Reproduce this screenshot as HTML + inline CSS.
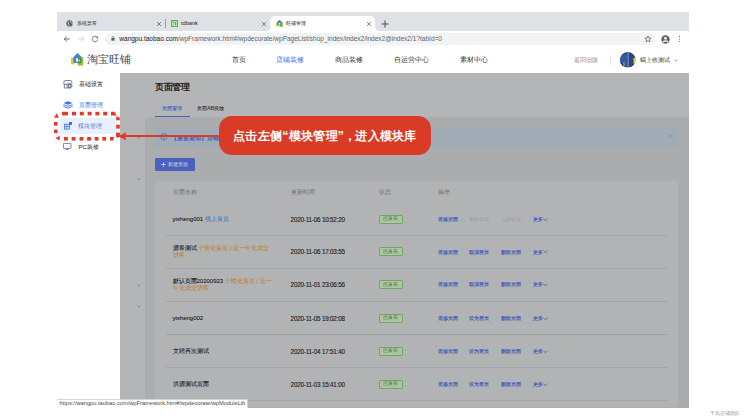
<!DOCTYPE html>
<html><head><meta charset="utf-8">
<style>
*{box-sizing:border-box;margin:0;padding:0}
html,body{width:746px;height:420px;overflow:hidden;background:#fff;font-family:"Liberation Sans",sans-serif}
.a{position:absolute;white-space:nowrap}
.t{line-height:1}
</style></head><body>
<!-- ============ BROWSER CHROME ============ -->
<div class="a" style="left:57px;top:12px;width:632px;height:19px;background:#dee1e6"></div>
<!-- tab1 -->
<svg class="a" style="left:65.9px;top:19.8px" width="7" height="7" viewBox="0 0 8 8"><circle cx="4" cy="4" r="3.6" fill="#5f6368"/><path d="M2 1.5 Q3.5 3 2.5 4.5 Q4 5 3.6 7.4 M5.2 0.8 Q4.6 2.5 6.2 3.2 Q7 3.5 7.6 3.8" stroke="#dee1e6" stroke-width="0.9" fill="none"/></svg>
<div class="a t" style="left:76.8px;top:20.6px;font-size:5.15px;color:#202124">系统异常</div>
<svg class="a" style="left:155.8px;top:20.6px" width="6" height="6" viewBox="0 0 6 6"><path d="M1 1L5 5M5 1L1 5" stroke="#45484c" stroke-width="0.65"/></svg>
<div class="a" style="left:165px;top:19px;width:1px;height:9px;background:#9aa0a6"></div>
<!-- tab2 -->
<svg class="a" style="left:170.8px;top:19.8px" width="7.2" height="7.2" viewBox="0 0 8 8"><rect width="8" height="8" fill="#4fb848"/><rect x="1.3" y="1.6" width="5.4" height="4.8" fill="#e6f4e4"/><path d="M1.9 2.2H4.2V2.9H3.4V5.8H2.7V2.9H1.9Z M4.3 2.2H5 Q6.2 2.2 6.2 4 Q6.2 5.8 5 5.8H4.3Z" fill="#4fb848"/></svg>

<div class="a t" style="left:181px;top:20.7px;font-size:5.65px;color:#202124">tdbank</div>
<svg class="a" style="left:260.5px;top:20.6px" width="6" height="6" viewBox="0 0 6 6"><path d="M1 1L5 5M5 1L1 5" stroke="#45484c" stroke-width="0.65"/></svg>
<!-- active tab -->
<div class="a" style="left:270px;top:16px;width:105px;height:15px;background:#fff;border-radius:5px 5px 0 0"></div><div class="a" style="left:266px;top:26.5px;width:4.5px;height:4.5px;background:#fff"></div><div class="a" style="left:265.5px;top:25.5px;width:5px;height:5.5px;background:#dee1e6;border-bottom-right-radius:4.5px"></div><div class="a" style="left:374.5px;top:26.5px;width:4.5px;height:4.5px;background:#fff"></div><div class="a" style="left:374.5px;top:25.5px;width:5px;height:5.5px;background:#dee1e6;border-bottom-left-radius:4.5px"></div>
<svg class="a" style="left:274.07px;top:18.07px" width="10.35" height="10.35" viewBox="0 0 18 18"><rect x="3" y="7.7" width="3.4" height="6.7" fill="#f2c230"/><rect x="9.7" y="7.1" width="5.5" height="8.4" fill="#8cc63f"/><path d="M5.2 7.6 L9.4 3 L14.3 7.4 L10.2 7.4 L10.2 13 L5.6 13 Z" fill="#3b82e8"/><ellipse cx="9.1" cy="10.1" rx="1.2" ry="2" fill="#fff"/><path d="M10 8.3 H11.8 Q13 8.3 13 9.6 V11.3 Q13 12.8 11.6 12.8 H10" stroke="#2f7a2c" stroke-width="1.1" fill="none"/></svg>
<div class="a t" style="left:286px;top:20.6px;font-size:5.25px;color:#202124">旺铺管理</div>
<svg class="a" style="left:365.9px;top:20.6px" width="6" height="6" viewBox="0 0 6 6"><path d="M1 1L5 5M5 1L1 5" stroke="#45484c" stroke-width="0.65"/></svg>
<svg class="a" style="left:380.8px;top:19.6px" width="8" height="8" viewBox="0 0 8 8"><path d="M4 0.5V7.5M0.5 4H7.5" stroke="#3c4043" stroke-width="0.9"/></svg>
<!-- toolbar -->
<div class="a" style="left:57px;top:31px;width:632px;height:16px;background:#fff"></div><div class="a" style="left:57px;top:46.5px;width:632px;height:0.8px;background:#e6e8eb"></div>
<svg class="a" style="left:63px;top:34.7px" width="8" height="8" viewBox="0 0 8 8"><path d="M6.9 4H1.3M3.9 1.4L1.3 4L3.9 6.6" stroke="#5a5e63" stroke-width="0.9" fill="none"/></svg>
<svg class="a" style="left:77px;top:34.7px" width="8" height="8" viewBox="0 0 8 8"><path d="M1.1 4H6.7M4.1 1.4L6.7 4L4.1 6.6" stroke="#c4c7ca" stroke-width="0.75" fill="none"/></svg>
<svg class="a" style="left:91px;top:34.7px" width="8" height="8" viewBox="0 0 8 8"><path d="M6.4 2.5 A2.8 2.8 0 1 0 6.8 4.6" stroke="#5a5e63" stroke-width="0.85" fill="none"/><path d="M7 1 V3.2 H4.8 Z" fill="#5f6368"/></svg>
<div class="a" style="left:104.8px;top:33.1px;width:550.4px;height:11.5px;background:#f1f3f4;border-radius:6px"></div>
<svg class="a" style="left:110.8px;top:36.3px" width="4" height="5" viewBox="0 0 4 5"><path d="M1 2.2V1.5a1 1 0 0 1 2 0v0.7" stroke="#5f6368" stroke-width="0.6" fill="none"/><rect x="0.4" y="2" width="3.2" height="2.7" fill="#5f6368"/></svg>
<div class="a t" style="left:119.3px;top:35.5px;font-size:6.52px;color:#5f6368"><span style="color:#202124">wangpu.taobao.com</span>/wpFramework.htm#/wpdecorate/wpPageList/shop_index/index2/index2@index2/1?tabId=0</div>
<svg class="a" style="left:643.6px;top:34.9px" width="8" height="8" viewBox="0 0 8 8"><polygon points="4.00,0.90 4.85,3.03 7.14,3.18 5.38,4.65 5.94,6.87 4.00,5.65 2.06,6.87 2.62,4.65 0.86,3.18 3.15,3.03" fill="none" stroke="#5f6368" stroke-width="0.75" stroke-linejoin="round"/></svg>
<svg class="a" style="left:660.5px;top:34.5px" width="9" height="9" viewBox="0 0 9 9"><circle cx="4.5" cy="4.5" r="4.2" fill="#5f6368"/><circle cx="4.5" cy="3.3" r="1.4" fill="#fff"/><path d="M1.9 7 Q4.5 4.6 7.1 7" stroke="#fff" stroke-width="1.2" fill="none"/></svg>
<svg class="a" style="left:677.8px;top:35px" width="3" height="8" viewBox="0 0 3 8"><circle cx="1.5" cy="1.4" r="0.62" fill="#5f6368"/><circle cx="1.5" cy="4" r="0.62" fill="#5f6368"/><circle cx="1.5" cy="6.5" r="0.62" fill="#5f6368"/></svg>

<!-- ============ PAGE HEADER ============ -->
<div class="a" style="left:57px;top:47.3px;width:632px;height:25.7px;background:#fff"></div>
<svg class="a" style="left:68px;top:50px" width="18" height="18" viewBox="0 0 18 18"><rect x="3" y="7.7" width="3.4" height="6.7" fill="#f2c230"/><rect x="9.7" y="7.1" width="5.5" height="8.4" fill="#8cc63f"/><path d="M5.2 7.6 L9.4 3 L14.3 7.4 L10.2 7.4 L10.2 13 L5.6 13 Z" fill="#3b82e8"/><ellipse cx="9.1" cy="10.1" rx="1.2" ry="2" fill="#fff"/><path d="M10 8.3 H11.8 Q13 8.3 13 9.6 V11.3 Q13 12.8 11.6 12.8 H10" stroke="#2f7a2c" stroke-width="1.1" fill="none"/></svg>
<div class="a t" style="left:87px;top:54.4px;font-size:10.5px;color:#404858;letter-spacing:0.1px">淘宝旺铺</div>
<div class="a t" style="left:232px;top:57px;font-size:6.8px;color:#333">首页</div>
<div class="a t" style="left:276px;top:57px;font-size:6.8px;color:#3a6ff0">店铺装修</div>
<div class="a t" style="left:335px;top:57px;font-size:6.8px;color:#333">商品装修</div>
<div class="a t" style="left:394px;top:57px;font-size:6.8px;color:#333">自运营中心</div>
<div class="a t" style="left:460px;top:57px;font-size:6.8px;color:#333">素材中心</div>
<div class="a t" style="left:574px;top:57px;font-size:6.3px;color:#7d8699">返回旧版</div>
<div class="a" style="left:609.5px;top:56px;width:0.7px;height:9px;background:#e3e5e8"></div>
<svg class="a" style="left:620.3px;top:52.3px" width="15.6" height="15.6" viewBox="0 0 16 16"><defs><clipPath id="av"><circle cx="8" cy="8" r="7.9"/></clipPath></defs><g clip-path="url(#av)"><rect width="16" height="16" fill="#2f4c8e"/><path d="M0 6 L5 2 L8 1 L8 16 L0 16Z" fill="#3556a0"/><path d="M9 1 L13 3 L16 8 L16 16 L9 16Z" fill="#2a4584"/><path d="M0 10 L3 12 L4 16 L0 16Z" fill="#1c2a4a"/><path d="M3 11 L4.5 10.5 L5 14 L3.5 14Z" fill="#a9a040"/><path d="M8.4 0 V16" stroke="#8d9bbf" stroke-width="0.9"/><path d="M13.8 6.5 L16 6 L16 12 L14 12.5Z" fill="#e0d93a"/></g></svg>
<div class="a t" style="left:639.8px;top:57px;font-size:6.2px;color:#333">蜗上收测试</div>
<svg class="a" style="left:673.5px;top:59px" width="4" height="3" viewBox="0 0 4 3"><path d="M0.4 0.6L2 2.2L3.6 0.6" stroke="#666" stroke-width="0.6" fill="none"/></svg>

<!-- ============ SIDEBAR ============ -->
<div class="a" style="left:57px;top:73px;width:63px;height:334px;background:#fff"></div>
<svg class="a" style="left:63px;top:80px" width="10" height="9" viewBox="0 0 10 9"><path d="M0.9 4.2 V2 Q0.9 0.5 2.4 0.5 H7.3 Q8.8 0.5 8.8 2 V3.4" stroke="#56627e" stroke-width="0.8" fill="none"/><path d="M0.9 4.3 H4.6 M1.3 4.3 V8 H4.6" stroke="#56627e" stroke-width="0.8" fill="none"/><circle cx="6.5" cy="5.8" r="2.6" stroke="#56627e" stroke-width="1" stroke-dasharray="1.1 0.9" fill="none"/><circle cx="6.5" cy="5.8" r="1.6" stroke="#56627e" stroke-width="1.2" fill="none"/></svg>
<div class="a t" style="left:78.5px;top:81px;font-size:6.1px;color:#1a1a1a">基础设置</div>
<svg class="a" style="left:62.5px;top:101.4px" width="10" height="7.5" viewBox="0 0 10 7.5"><path d="M5 0.2 L9.6 2 L5 3.8 L0.4 2Z" fill="#3d73eb"/><path d="M0.4 3.6 L5 5.4 L9.6 3.6" stroke="#3d73eb" stroke-width="0.9" fill="none"/><path d="M0.4 5.4 L5 7.2 L9.6 5.4" stroke="#3d73eb" stroke-width="0.9" fill="none"/></svg>
<div class="a t" style="left:78.5px;top:102px;font-size:6.1px;color:#2f66e6">页面管理</div>
<div class="a" style="left:60px;top:118px;width:56.8px;height:16.3px;background:#e9f0fd;border-radius:1.5px"></div>
<svg class="a" style="left:63.6px;top:122.3px" width="8" height="7.5" viewBox="0 0 8 7.5"><rect x="0.4" y="2.2" width="5" height="4.9" stroke="#3d73eb" stroke-width="0.8" fill="none"/><path d="M0.4 4.6 H5.4 M2.9 2.2 V7.1" stroke="#3d73eb" stroke-width="0.8"/><rect x="5" y="0" width="3" height="3" fill="#3d73eb"/></svg>
<div class="a t" style="left:78.4px;top:123px;font-size:6.1px;color:#4f76dc">模块管理</div>
<svg class="a" style="left:63.3px;top:143.3px" width="8.4" height="7.2" viewBox="0 0 8.4 7.2"><rect x="0.4" y="0.4" width="7.6" height="5" rx="0.4" stroke="#5a6a8a" stroke-width="0.8" fill="none"/><path d="M4.2 5.4V7M2.4 6.8H6" stroke="#5a6a8a" stroke-width="0.8"/></svg>
<div class="a t" style="left:78.5px;top:144px;font-size:6.1px;color:#1a1a1a">PC装修</div>

<!-- ============ MAIN (overlaid) ============ -->
<div class="a" style="left:120px;top:73px;width:569px;height:334px;background:#b4b5b7"></div>
<div class="a t" style="left:155.2px;top:83px;font-size:8.5px;letter-spacing:-0.45px;font-weight:bold;color:#1c1c1d">页面管理</div>
<div class="a t" style="left:162px;top:106px;font-size:5.35px;color:#4563cc;-webkit-text-stroke-width:0.12px">页面管理</div>
<div class="a t" style="left:197px;top:106px;font-size:5.35px;color:#2e2e30;-webkit-text-stroke-width:0.08px">页面AB投放</div>
<div class="a" style="left:155.3px;top:115.9px;width:34.7px;height:1.1px;background:#4460c0"></div>
<div class="a" style="left:144.5px;top:117px;width:544.5px;height:290.5px;background:#abacae"></div>
<!-- chevrons left strip -->
<svg class="a" style="left:136.5px;top:135.5px" width="4" height="3" viewBox="0 0 4 3"><path d="M0.4 2.4L2 0.8L3.6 2.4" stroke="#76777a" stroke-width="0.7" fill="none"/></svg>
<svg class="a" style="left:136.5px;top:178px" width="4" height="3" viewBox="0 0 4 3"><path d="M0.4 0.6L2 2.2L3.6 0.6" stroke="#76777a" stroke-width="0.7" fill="none"/></svg>
<svg class="a" style="left:136.5px;top:283.5px" width="4" height="3" viewBox="0 0 4 3"><path d="M0.4 0.6L2 2.2L3.6 0.6" stroke="#76777a" stroke-width="0.7" fill="none"/></svg>
<svg class="a" style="left:136.5px;top:304.5px" width="4" height="3" viewBox="0 0 4 3"><path d="M0.4 0.6L2 2.2L3.6 0.6" stroke="#76777a" stroke-width="0.7" fill="none"/></svg>
<!-- alert -->
<div class="a" style="left:155px;top:127.5px;width:523.5px;height:20.5px;background:#a1acb6"></div>
<svg class="a" style="left:159.8px;top:133.3px" width="7.5" height="7.5" viewBox="0 0 8 8"><circle cx="4" cy="4" r="3.4" stroke="#3d5bb8" stroke-width="0.7" fill="none"/><path d="M4 3.4V6" stroke="#3d5bb8" stroke-width="0.8"/><circle cx="4" cy="2.3" r="0.45" fill="#3d5bb8"/></svg>
<div class="a t" style="left:171.4px;top:135.6px;font-size:5.8px;font-weight:bold;color:#4460c0">【重要通知】店铺装修升级</div>
<svg class="a" style="left:667.5px;top:133.5px" width="5" height="5" viewBox="0 0 5 5"><path d="M0.5 0.5L4.5 4.5M4.5 0.5L0.5 4.5" stroke="#7d8088" stroke-width="0.6"/></svg>
<!-- button -->
<div class="a" style="left:155px;top:158.3px;width:39.6px;height:12.3px;background:#4a62bd;border-radius:1.5px"></div>
<svg class="a" style="left:161px;top:162px" width="5" height="5" viewBox="0 0 5 5"><path d="M2.5 0.2V4.8M0.2 2.5H4.8" stroke="#d0d6ec" stroke-width="0.8"/></svg><div class="a t" style="left:167.5px;top:161.6px;font-size:5.3px;color:#d0d6ec">新建页面</div>
<!-- card -->
<div class="a" style="left:155px;top:181.2px;width:523px;height:226px;background:#b2b3b5"></div>
<div class="a t" style="left:172.9px;top:190.2px;font-size:5.8px;color:#6e6f71">页面名称</div>
<div class="a t" style="left:290.8px;top:190.2px;font-size:5.8px;color:#6e6f71">更新时间</div>
<div class="a t" style="left:379.2px;top:190.2px;font-size:5.8px;color:#6e6f71">状态</div>
<div class="a t" style="left:437.5px;top:190.2px;font-size:5.8px;color:#6e6f71">操作</div>

<div id="rows">
<div class="a t" style="left:172.5px;top:216.0px;font-size:6.0px;color:#1e1e1f;-webkit-text-stroke-width:0.1px">yisheng001 <span style="color:#4a7dc0">线上首页</span></div>
<div class="a t" style="left:290.6px;top:216.8px;font-size:6.3px;letter-spacing:-0.2px;color:#1e1e1f;-webkit-text-stroke-width:0.12px">2020-11-06 10:52:20</div>
<div class="a" style="left:379px;top:214.6px;width:24px;height:9.1px;background:#adc3a4;border:0.9px solid #6fa860;border-radius:1.2px"></div>
<div class="a t" style="left:382.8px;top:216.3px;font-size:5.4px;color:#3a7a30">已发布</div>
<div class="a t" style="left:438.2px;top:216.8px;font-size:5.3px;color:#3d5bb8;-webkit-text-stroke-width:0.15px">装修页面</div>
<div class="a t" style="left:469.4px;top:216.8px;font-size:5.3px;color:#9a9b9d;-webkit-text-stroke-width:0">删除页面</div>
<div class="a t" style="left:501.0px;top:216.8px;font-size:5.3px;color:#9a9b9d;-webkit-text-stroke-width:0">人群投放</div>
<div class="a t" style="left:532.8px;top:216.8px;font-size:5.3px;color:#3d5bb8;-webkit-text-stroke-width:0.15px">更多</div>
<svg class="a" style="left:542.6px;top:217.7px" width="5" height="3.4" viewBox="0 0 5 3.4"><path d="M0.4 0.5L2.5 2.8L4.6 0.5" stroke="#3d5bb8" stroke-width="0.75" fill="none"/></svg>
<div class="a t" style="left:172.5px;top:244.9px;font-size:6.0px;color:#1e1e1f;-webkit-text-stroke-width:0.1px">源希测试 <span style="color:#bd8840">个性化首页 | 近一年无成交</span></div>
<div class="a t" style="left:172.5px;top:252.3px;font-size:6.0px;color:#1e1e1f;-webkit-text-stroke-width:0.1px"><span style="color:#bd8840">访客</span></div>
<div class="a t" style="left:290.6px;top:249.4px;font-size:6.3px;letter-spacing:-0.2px;color:#1e1e1f;-webkit-text-stroke-width:0.12px">2020-11-06 17:03:55</div>
<div class="a" style="left:379px;top:247.3px;width:24px;height:9.1px;background:#adc3a4;border:0.9px solid #6fa860;border-radius:1.2px"></div>
<div class="a t" style="left:382.8px;top:249.0px;font-size:5.4px;color:#3a7a30">已发布</div>
<div class="a t" style="left:438.2px;top:249.5px;font-size:5.3px;color:#3d5bb8;-webkit-text-stroke-width:0.15px">装修页面</div>
<div class="a t" style="left:469.4px;top:249.5px;font-size:5.3px;color:#3d5bb8;-webkit-text-stroke-width:0.15px">取消首页</div>
<div class="a t" style="left:501.0px;top:249.5px;font-size:5.3px;color:#3d5bb8;-webkit-text-stroke-width:0.15px">删除页面</div>
<div class="a t" style="left:532.8px;top:249.5px;font-size:5.3px;color:#3d5bb8;-webkit-text-stroke-width:0.15px">更多</div>
<svg class="a" style="left:542.6px;top:250.4px" width="5" height="3.4" viewBox="0 0 5 3.4"><path d="M0.4 0.5L2.5 2.8L4.6 0.5" stroke="#3d5bb8" stroke-width="0.75" fill="none"/></svg>
<div class="a t" style="left:172.5px;top:277.8px;font-size:6.0px;color:#1e1e1f;-webkit-text-stroke-width:0.1px">默认页面20200923 <span style="color:#bd8840">个性化首页 | 近一</span></div>
<div class="a t" style="left:172.5px;top:285.2px;font-size:6.0px;color:#1e1e1f;-webkit-text-stroke-width:0.1px"><span style="color:#bd8840">年无成交访客</span></div>
<div class="a t" style="left:290.6px;top:282.4px;font-size:6.3px;letter-spacing:-0.2px;color:#1e1e1f;-webkit-text-stroke-width:0.12px">2020-11-01 23:06:56</div>
<div class="a" style="left:379px;top:280.2px;width:24px;height:9.1px;background:#adc3a4;border:0.9px solid #6fa860;border-radius:1.2px"></div>
<div class="a t" style="left:382.8px;top:281.9px;font-size:5.4px;color:#3a7a30">已发布</div>
<div class="a t" style="left:438.2px;top:282.4px;font-size:5.3px;color:#3d5bb8;-webkit-text-stroke-width:0.15px">装修页面</div>
<div class="a t" style="left:469.4px;top:282.4px;font-size:5.3px;color:#3d5bb8;-webkit-text-stroke-width:0.15px">取消首页</div>
<div class="a t" style="left:501.0px;top:282.4px;font-size:5.3px;color:#3d5bb8;-webkit-text-stroke-width:0.15px">删除页面</div>
<div class="a t" style="left:532.8px;top:282.4px;font-size:5.3px;color:#3d5bb8;-webkit-text-stroke-width:0.15px">更多</div>
<svg class="a" style="left:542.6px;top:283.3px" width="5" height="3.4" viewBox="0 0 5 3.4"><path d="M0.4 0.5L2.5 2.8L4.6 0.5" stroke="#3d5bb8" stroke-width="0.75" fill="none"/></svg>
<div class="a t" style="left:172.5px;top:315.0px;font-size:6.0px;color:#1e1e1f;-webkit-text-stroke-width:0.1px">yisheng002</div>
<div class="a t" style="left:290.6px;top:315.8px;font-size:6.3px;letter-spacing:-0.2px;color:#1e1e1f;-webkit-text-stroke-width:0.12px">2020-11-05 19:02:08</div>
<div class="a" style="left:379px;top:313.6px;width:24px;height:9.1px;background:#adc3a4;border:0.9px solid #6fa860;border-radius:1.2px"></div>
<div class="a t" style="left:382.8px;top:315.3px;font-size:5.4px;color:#3a7a30">已发布</div>
<div class="a t" style="left:438.2px;top:315.8px;font-size:5.3px;color:#3d5bb8;-webkit-text-stroke-width:0.15px">装修页面</div>
<div class="a t" style="left:469.4px;top:315.8px;font-size:5.3px;color:#3d5bb8;-webkit-text-stroke-width:0.15px">设为首页</div>
<div class="a t" style="left:501.0px;top:315.8px;font-size:5.3px;color:#3d5bb8;-webkit-text-stroke-width:0.15px">删除页面</div>
<div class="a t" style="left:532.8px;top:315.8px;font-size:5.3px;color:#3d5bb8;-webkit-text-stroke-width:0.15px">更多</div>
<svg class="a" style="left:542.6px;top:316.7px" width="5" height="3.4" viewBox="0 0 5 3.4"><path d="M0.4 0.5L2.5 2.8L4.6 0.5" stroke="#3d5bb8" stroke-width="0.75" fill="none"/></svg>
<div class="a t" style="left:172.5px;top:348.0px;font-size:6.0px;color:#1e1e1f;-webkit-text-stroke-width:0.1px">文聘再次测试</div>
<div class="a t" style="left:290.6px;top:348.8px;font-size:6.3px;letter-spacing:-0.2px;color:#1e1e1f;-webkit-text-stroke-width:0.12px">2020-11-04 17:51:40</div>
<div class="a" style="left:379px;top:346.6px;width:24px;height:9.1px;background:#adc3a4;border:0.9px solid #6fa860;border-radius:1.2px"></div>
<div class="a t" style="left:382.8px;top:348.3px;font-size:5.4px;color:#3a7a30">已发布</div>
<div class="a t" style="left:438.2px;top:348.8px;font-size:5.3px;color:#3d5bb8;-webkit-text-stroke-width:0.15px">装修页面</div>
<div class="a t" style="left:469.4px;top:348.8px;font-size:5.3px;color:#3d5bb8;-webkit-text-stroke-width:0.15px">设为首页</div>
<div class="a t" style="left:501.0px;top:348.8px;font-size:5.3px;color:#3d5bb8;-webkit-text-stroke-width:0.15px">删除页面</div>
<div class="a t" style="left:532.8px;top:348.8px;font-size:5.3px;color:#3d5bb8;-webkit-text-stroke-width:0.15px">更多</div>
<svg class="a" style="left:542.6px;top:349.7px" width="5" height="3.4" viewBox="0 0 5 3.4"><path d="M0.4 0.5L2.5 2.8L4.6 0.5" stroke="#3d5bb8" stroke-width="0.75" fill="none"/></svg>
<div class="a t" style="left:172.5px;top:380.9px;font-size:6.0px;color:#1e1e1f;-webkit-text-stroke-width:0.1px">洪源测试页面</div>
<div class="a t" style="left:290.6px;top:381.7px;font-size:6.3px;letter-spacing:-0.2px;color:#1e1e1f;-webkit-text-stroke-width:0.12px">2020-11-03 15:41:00</div>
<div class="a" style="left:379px;top:379.5px;width:24px;height:9.1px;background:#adc3a4;border:0.9px solid #6fa860;border-radius:1.2px"></div>
<div class="a t" style="left:382.8px;top:381.2px;font-size:5.4px;color:#3a7a30">已发布</div>
<div class="a t" style="left:438.2px;top:381.7px;font-size:5.3px;color:#3d5bb8;-webkit-text-stroke-width:0.15px">装修页面</div>
<div class="a t" style="left:469.4px;top:381.7px;font-size:5.3px;color:#3d5bb8;-webkit-text-stroke-width:0.15px">设为首页</div>
<div class="a t" style="left:501.0px;top:381.7px;font-size:5.3px;color:#3d5bb8;-webkit-text-stroke-width:0.15px">删除页面</div>
<div class="a t" style="left:532.8px;top:381.7px;font-size:5.3px;color:#3d5bb8;-webkit-text-stroke-width:0.15px">更多</div>
<svg class="a" style="left:542.6px;top:382.6px" width="5" height="3.4" viewBox="0 0 5 3.4"><path d="M0.4 0.5L2.5 2.8L4.6 0.5" stroke="#3d5bb8" stroke-width="0.75" fill="none"/></svg>
<div class="a" style="left:166px;top:234.8px;width:502px;height:0.7px;background:#a4a5a7"></div>
<div class="a" style="left:166px;top:267.7px;width:502px;height:0.7px;background:#a4a5a7"></div>
<div class="a" style="left:166px;top:300.7px;width:502px;height:0.7px;background:#a4a5a7"></div>
<div class="a" style="left:166px;top:333.8px;width:502px;height:0.7px;background:#a4a5a7"></div>
<div class="a" style="left:166px;top:366.9px;width:502px;height:0.7px;background:#a4a5a7"></div>
<div class="a" style="left:166px;top:400.0px;width:502px;height:0.7px;background:#a4a5a7"></div>
</div>

<!-- ============ CALLOUT ============ -->
<div class="a" style="left:122px;top:134.9px;width:98px;height:1.9px;background:#e0392a"></div>
<svg class="a" style="left:118.3px;top:131.6px" width="10" height="9" viewBox="0 0 10 9"><path d="M0.3 4.25 L8.2 0.3 L7.2 4.25 L8.2 8.2Z" fill="#e0392a"/></svg>
<div class="a" style="left:219.3px;top:116.4px;width:211.7px;height:38.3px;background:#da3b26;border-radius:13px"></div>
<div class="a t" style="left:233px;top:129.5px;font-size:12.3px;font-weight:bold;color:#fff;letter-spacing:0.3px">点击左侧“模块管理”<span style="display:inline-block;width:11px">，</span>进入模块库</div>
<!-- dotted highlight -->
<svg class="a" style="left:0;top:0" width="130" height="150" viewBox="0 0 130 150"><g fill="#e8382a"><rect x="62" y="111.8" width="6" height="3.6"/><rect x="72" y="111.8" width="4" height="3.6"/><rect x="79.8" y="111.8" width="4" height="3.6"/><rect x="87.6" y="111.8" width="4" height="3.6"/><rect x="95.4" y="111.8" width="4" height="3.6"/><rect x="103.2" y="111.8" width="4" height="3.6"/><path d="M111 111.8 H114.6 L116.6 115.4 H111Z"/><rect x="116.2" y="124.7" width="3.6" height="3.9"/><rect x="116.2" y="132.7" width="3.6" height="3.9"/><path d="M116.2 116.4 L119.8 117.4 V120.3 H116.2Z"/><path d="M116.2 132.7 H119.8 V136.6 L117.5 138 L116.2 136.6Z"/><rect x="64" y="137" width="3.9" height="3.6"/><rect x="71.6" y="137" width="3.9" height="3.6"/><rect x="79.5" y="137" width="3.9" height="3.6"/><rect x="87.1" y="137" width="3.9" height="3.6"/><rect x="94.7" y="137" width="3.9" height="3.6"/><rect x="102.3" y="137" width="3.9" height="3.6"/><path d="M110 137 H114 L113.4 140.6 H110Z"/><rect x="54" y="122" width="3.6" height="3.6"/><rect x="54" y="129.6" width="3.6" height="3.6"/><path d="M56.8 113.3 L58.8 117.7 L54 117.7Z"/><path d="M55.3 138.2 L59.7 135.8 L59.7 140.6Z"/></g></svg>
<!-- status bubble -->
<div class="a" style="left:57px;top:399px;width:191px;height:8.5px;background:#fff;border-top:0.6px solid #d6d6d6;border-right:0.6px solid #d6d6d6"></div>
<div class="a t" style="left:59.4px;top:400.8px;font-size:5.7px;color:#4a4a4a">https://wangpu.taobao.com/wpFramework.htm#/wpdecorate/wpModuleLib</div>
<!-- watermark -->
<div class="a t" style="left:710px;top:410.9px;font-size:5.4px;color:#999">千岛店铺团队</div>
</body></html>
